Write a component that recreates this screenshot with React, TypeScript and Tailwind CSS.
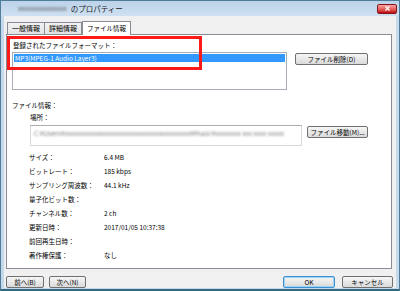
import { X } from "lucide-react";

const font = { fontFamily: '"Meiryo UI", "Noto Sans CJK JP", "Noto Sans", sans-serif' };

const rows: [string, string][] = [
    ["サイズ：", "6.4 MB"],
    ["ビットレート：", "185 kbps"],
    ["サンプリング周波数：", "44.1 kHz"],
    ["量子化ビット数：", ""],
    ["チャンネル数：", "2 ch"],
    ["更新日時：", "2017/01/05 10:37:38"],
    ["前回再生日時：", ""],
    ["著作権保護：", "なし"],
];

function Btn({ label, w, focus }: { label: string; w: string; focus?: boolean }) {
    return (
        <div
            className={`${w} h-[12px] flex items-center justify-center rounded-[2px] border bg-linear-to-b from-[#f6f6f6] to-[#dadada] text-[6.5px] leading-none text-black ${
                focus ? "border-[#3c8fd0] shadow-[inset_0_0_0_1px_#9fd2f5]" : "border-[#707070]"
            }`}
        >
            {label}
        </div>
    );
}

export default function App() {
    return (
        <div
            className="w-[400px] h-[291px] flex flex-col bg-[#c6d9ec] border border-[#4f7c96] border-b-[2px] border-b-[#2f6a80] overflow-hidden"
            style={font}
        >
            {/* title bar */}
            <div className="h-[15px] shrink-0 flex items-center bg-linear-to-b from-[#bcd3ea] to-[#cfe0f1]">
                <span className="ml-[17px] text-[7px] text-[#555] blur-[1.2px]">xxxxxxxxxxxxxx</span>
                <span className="ml-[4px] text-[7.5px] text-[#1a1a1a]">のプロパティー</span>
                <span className="flex-1" />
                <span className="mr-[2px] shrink-0 w-[20px] h-[10px] rounded-[2px] border border-red-900 bg-linear-to-b from-red-300 to-red-700 flex items-center justify-center">
                    <X size={7} color="#ffffff" strokeWidth={4} />
                </span>
            </div>

            <div className="flex-1 mx-[3px] mb-[2px] bg-[#f0f0f0] flex flex-col">
                {/* tabs */}
                <div className="h-[16px] flex items-end pl-[3px] mt-[2px]">
                    <div className="h-[12px] px-[4px] flex items-center border border-b-0 border-[#898c95] bg-linear-to-b from-[#f2f2f2] to-[#e3e3e3] text-[7px] text-black">
                        一般情報
                    </div>
                    <div className="h-[12px] px-[4px] flex items-center border border-b-0 border-l-0 border-[#898c95] bg-linear-to-b from-[#f2f2f2] to-[#e3e3e3] text-[7px] text-black">
                        詳細情報
                    </div>
                    <div className="h-[14px] px-[4px] -mb-[1px] z-10 flex items-center border border-b-0 border-[#898c95] bg-white text-[6.5px] text-black">
                        ファイル情報
                    </div>
                </div>

                {/* panel */}
                <div className="ml-[2px] mr-[4px] h-[235px] bg-white border border-[#898c95] relative text-[6.5px] text-black">
                    <div className="absolute left-[0px] top-[1px] w-[195px] h-[34px] border-[3px] border-[#ff1a1a] z-10" />

                    <div className="mt-[6px] ml-[6px] h-[8px] leading-[8px]">登録されたファイルフォーマット：</div>
                    <div className="flex mt-[3px] ml-[5px]">
                        <div className="w-[275px] h-[38px] border border-[#a5acb5] bg-white p-[1px]">
                            <div className="h-[8px] bg-[#3399ff] text-white leading-[8px] pl-[1px]">MP3(MPEG-1 Audio Layer3)</div>
                        </div>
                        <div className="ml-[8px] mt-[1px]">
                            <Btn label="ファイル削除(D)" w="w-[73px]" />
                        </div>
                    </div>

                    <div className="mt-[11px] ml-[5px] h-[8px] leading-[8px]">ファイル情報：</div>
                    <div className="mt-[4px] ml-[23px] h-[8px] leading-[8px]">場所：</div>
                    <div className="flex mt-[4px] ml-[23px]">
                        <div className="w-[272px] h-[21px] border border-[#d5d9de] border-t-[#abadb3] bg-white pt-[3px] pl-[3px] overflow-hidden">
                            <span className="text-[#777] blur-[1px] whitespace-nowrap">
                                C:¥Users¥xxxxxxxxxxxxxxxxxxxxxxxxxxxxxxxxxxxxxxx¥Music¥xxxxxxxx xxx xxxx xxxxx
                            </span>
                        </div>
                        <div className="ml-[5px] mt-[1px]">
                            <Btn label="ファイル移動(M)..." w="w-[61px]" />
                        </div>
                    </div>

                    <div className="mt-[4px] ml-[22px] flex flex-col">
                        {rows.map(([k, v]) => (
                            <div key={k} className="flex h-[14px] leading-[14px]">
                                <div className="w-[75px]">{k}</div>
                                <div>{v}</div>
                            </div>
                        ))}
                    </div>
                </div>

                {/* bottom buttons */}
                <div className="flex mt-[7px] ml-[2px] mr-[3px]">
                    <Btn label="前へ(B)" w="w-[38px]" />
                    <div className="ml-[5px]">
                        <Btn label="次へ(N)" w="w-[37px]" />
                    </div>
                    <div className="ml-auto">
                        <Btn label="OK" w="w-[52px]" focus />
                    </div>
                    <div className="ml-[7px]">
                        <Btn label="キャンセル" w="w-[51px]" />
                    </div>
                </div>
            </div>
        </div>
    );
}
